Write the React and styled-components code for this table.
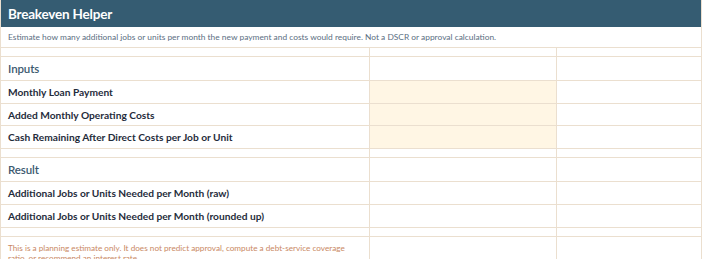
import React from "react";
import styled, { createGlobalStyle } from "styled-components";

const GlobalStyle = createGlobalStyle`
  html, body {
    margin: 0;
    padding: 0;
    background: #ffffff;
  }
  body {
    font-family: Lato, "Open Sans", sans-serif;
  }
`;

const rows = [
  { kind: "blank" },
  { kind: "section", label: "Inputs" },
  { kind: "field", label: "Monthly Loan Payment", input: true, h: 23 },
  { kind: "field", label: "Added Monthly Operating Costs", input: true, h: 22 },
  { kind: "field", label: "Cash Remaining After Direct Costs per Job or Unit", input: true, h: 23 },
  { kind: "blank" },
  { kind: "section", label: "Result" },
  { kind: "field", label: "Additional Jobs or Units Needed per Month (raw)", h: 23 },
  { kind: "field", label: "Additional Jobs or Units Needed per Month (rounded up)", h: 23 },
  { kind: "blank" },
];

const heights = { blank: 9, section: 24 };

const App = () => {
  return (
    <>
      <GlobalStyle />
      <Sheet>
        <Banner>Breakeven Helper</Banner>
        <Intro>
          Estimate how many additional jobs or units per month the new payment and costs would
          require. Not a DSCR or approval calculation.
        </Intro>
        {rows.map((row, i) => (
          <Row key={i} $h={row.h || heights[row.kind]}>
            <Cell>
              {row.kind === "section" && <SectionLabel>{row.label}</SectionLabel>}
              {row.kind === "field" && <FieldLabel>{row.label}</FieldLabel>}
            </Cell>
            <Cell $input={row.input} />
            <Cell />
          </Row>
        ))}
        <Row $h={40}>
          <Cell $top>
            <Note>
              This is a planning estimate only. It does not predict approval, compute a debt-service
              coverage ratio, or recommend an interest rate.
            </Note>
          </Cell>
          <Cell />
          <Cell />
        </Row>
      </Sheet>
    </>
  );
};

export default App;

const line = "#ebdfcf";

const Sheet = styled.div`
  width: 702px;
  box-sizing: border-box;
  border-left: 1px solid ${line};
  display: flex;
  flex-direction: column;
`;

const Banner = styled.div`
  height: 27px;
  box-sizing: border-box;
  background: #355c72;
  border-right: 1px solid ${line};
  color: #ffffff;
  font-weight: 700;
  font-size: 13.5px;
  letter-spacing: -0.2px;
  display: flex;
  align-items: center;
  padding-left: 7px;
`;

const Intro = styled.div`
  height: 21px;
  box-sizing: border-box;
  border-right: 1px solid ${line};
  border-bottom: 1px solid ${line};
  color: #5a6e82;
  font-size: 8.4px;
  display: flex;
  align-items: center;
  padding-left: 7px;
  white-space: nowrap;
`;

const Row = styled.div`
  display: grid;
  grid-template-columns: 369px 187px 145px;
  height: ${(p) => p.$h}px;
`;

const Cell = styled.div`
  box-sizing: border-box;
  border-right: 1px solid ${line};
  border-bottom: 1px solid ${line};
  background: ${(p) => (p.$input ? "#fff6e4" : "#ffffff")};
  display: flex;
  align-items: ${(p) => (p.$top ? "flex-start" : "center")};
  padding-left: 7px;
  overflow: hidden;
`;

const SectionLabel = styled.span`
  color: #3c5a70;
  font-size: 11.5px;
  font-weight: 600;
  letter-spacing: -0.1px;
`;

const FieldLabel = styled.span`
  color: #1f2c3b;
  font-size: 10.2px;
  font-weight: 700;
  white-space: nowrap;
`;

const Note = styled.p`
  margin: 0;
  padding-top: 6px;
  width: 346px;
  color: #c98863;
  font-size: 8.2px;
  line-height: 10px;
`;
